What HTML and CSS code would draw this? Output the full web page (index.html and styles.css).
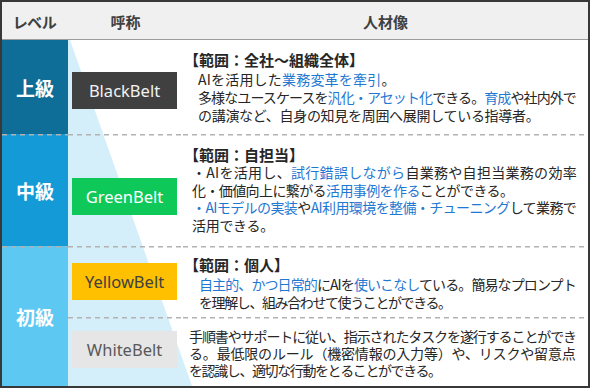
FILE: index.html
```html
<!DOCTYPE html>
<html lang="ja">
<head>
<meta charset="utf-8">
<link rel="stylesheet" href="styles.css">
</head>
<body>
<div class="table">
  <div class="head">
    <div class="hcell">レベル</div>
    <div class="hcell">呼称</div>
    <div class="hcell">人材像</div>
  </div>
  <div class="body">
    <div class="level lv1">上級</div>
    <div class="belt-cell r1"><div class="belt black">BlackBelt</div></div>
    <div class="desc r1">
      <p class="scope">【範囲：全社～組織全体】</p>
      <p class="ind sp-p02">AIを活用した<span class="hl">業務変革を牽引</span>。</p>
      <p class="ind sp-m09">多様なユースケースを<span class="hl">汎化・アセット化</span>できる。<span class="hl">育成</span>や社内外で</p>
      <p class="ind sp-m03">の講演など、自身の知見を周囲へ展開している指導者。</p>
    </div>

    <div class="level lv2 dash">中級</div>
    <div class="belt-cell r2 dash"><div class="belt green">GreenBelt</div></div>
    <div class="desc r2 dash">
      <p class="scope">【範囲：自担当】</p>
      <p class="ind2 sp-p03">・AIを活用し、<span class="hl">試行錯誤しながら</span>自業務や自担当業務の効率</p>
      <p class="ind2 sp-m06">化・価値向上に繋がる<span class="hl">活用事例を作る</span>ことができる。</p>
      <p class="ind2 sp-m06"><span class="hl">・AIモデルの実装</span>や<span class="hl">AI利用環境を整備・チューニング</span>して業務で</p>
      <p class="ind2 sp-m03">活用できる。</p>
    </div>

    <div class="level lv3 dash">初級</div>
    <div class="belt-cell r3 dash"><div class="belt yellow">YellowBelt</div></div>
    <div class="desc r3 dash">
      <p class="scope">【範囲：個人】</p>
      <p class="ind3 sp-m09"><span class="hl">自主的、かつ日常的</span>にAIを<span class="hl">使いこなし</span>ている。簡易なプロンプト</p>
      <p class="ind3 sp-m14">を理解し、組み合わせて使うことができる。</p>
    </div>

    <div class="belt-cell r4 dash"><div class="belt white">WhiteBelt</div></div>
    <div class="desc r4 dash">
      <p class="ind4 sp-m11">手順書やサポートに従い、指示されたタスクを遂行することができ</p>
      <p class="ind4 sp-m02">る。最低限のルール（機密情報の入力等）や、リスクや留意点</p>
      <p class="ind4 sp-m14">を認識し、適切な行動をとることができる。</p>
    </div>
  </div>
</div>
</body>
</html>
```

FILE: styles.css
```css
* { box-sizing: border-box; }
html, body { margin: 0; padding: 0; background: #fff; }
body {
  font-family: "Noto Sans CJK JP", "Noto Sans", sans-serif;
  color: #262626;
}
.table {
  width: 590px;
  height: 388px;
  border: 2px solid #383838;
  display: flex;
  flex-direction: column;
}
.head {
  height: 38px;
  background: #f0f0f0;
  border-bottom: 1px solid #9c9c9c;
  display: grid;
  grid-template-columns: 66px 115px 1fr;
  align-items: center;
}
.hcell {
  text-align: center;
  font-weight: 700;
  font-size: 15px;
  color: #404040;
  font-feature-settings: "palt";
  padding-top: 1px;
}
.body {
  position: relative;
  flex: 1;
  display: grid;
  grid-template-columns: 66px 115px 1fr;
  grid-template-rows: 94px 112px 71px 1fr;
}
.body::before {
  content: "";
  position: absolute;
  left: 66px;
  top: 0;
  width: 124px;
  height: 100%;
  background: #d4eefa;
  clip-path: polygon(0 0, 2px 0, 100% 100%, 0 100%);
  z-index: 0;
}
.level, .belt-cell, .desc { position: relative; z-index: 1; }
.level {
  display: flex;
  align-items: center;
  justify-content: center;
  color: #fff;
  font-weight: 700;
  font-size: 19px;
}
.lv1 { background-color: #0e6e97; }
.lv2 { background-color: #149ad6; }
.lv3 { background-color: #5dc8f1; grid-row: 3 / span 2; }
.dash {
  background-image: repeating-linear-gradient(90deg, #b2b2b2 0 5px, transparent 5px 9px);
  background-size: 100% 1.5px;
  background-repeat: no-repeat;
  background-position: left top;
}
.belt-cell {
  display: flex;
  align-items: center;
  padding-left: 4px;
}
.r1 .belt { margin-top: 7px; }
.r2 .belt { margin-top: 12px; }
.r3 .belt { margin-top: -1px; }
.r4 .belt { margin-top: -4px; }
.belt {
  width: 105px;
  height: 37px;
  display: flex;
  align-items: center;
  justify-content: center;
  font-family: "Noto Sans", sans-serif;
  font-size: 16.5px;
}
.black { background: #404040; color: #f2f2f2; }
.green { background: #0ec95a; color: #fff; }
.yellow { background: #ffc000; color: #404040; }
.white { background: #e6e6e6; color: #595959; }
.desc {
  display: flex;
  flex-direction: column;
  justify-content: center;
  padding-left: 1px;
  font-size: 14px;
  line-height: 18px;
  white-space: nowrap;
}
.desc p { margin: 0; }
.r1.desc { padding-top: 1px; }
.r2.desc { padding-top: 0; line-height: 17.5px; }
.r3.desc { padding-top: 4px; }
.r4.desc { padding-top: 3px; line-height: 17px; }
.scope { font-weight: 700; font-size: 15px; margin-bottom: 1px !important; }
.ind { padding-left: 14px; }
.ind2 { padding-left: 8px; }
.ind3 { padding-left: 15px; }
.ind4 { padding-left: 5px; }
.sp-p03 { letter-spacing: 0.3px; }
.sp-p02 { letter-spacing: 0.2px; }
.sp-m02 { letter-spacing: -0.18px; }
.sp-m03 { letter-spacing: -0.3px; }
.sp-m06 { letter-spacing: -0.6px; }
.sp-m09 { letter-spacing: -0.9px; }
.sp-m11 { letter-spacing: -1.1px; }
.sp-m14 { letter-spacing: -1.4px; }
.hl { color: #1f78d1; }
```
